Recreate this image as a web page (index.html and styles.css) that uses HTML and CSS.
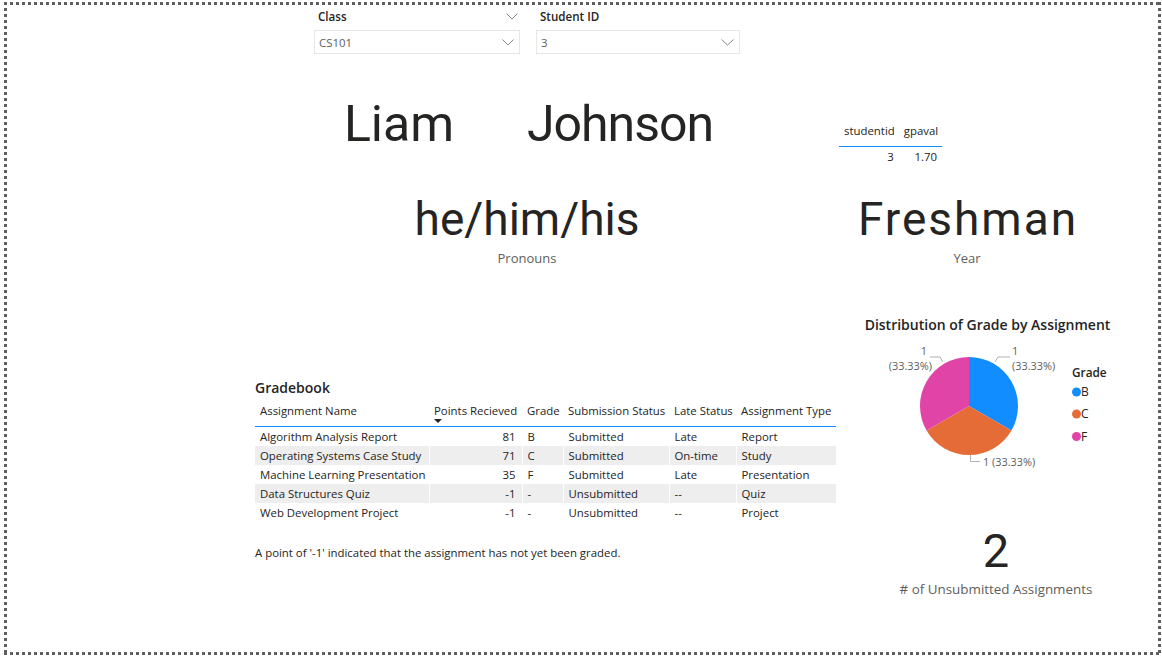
FILE: index.html
```html
<!DOCTYPE html>
<html lang="en">
<head>
<meta charset="utf-8">
<title>Student Report</title>
<link rel="stylesheet" href="styles.css">
</head>
<body>
<div class="page">
  <div class="slicers">
    <div class="slicer slicer-class">
      <div class="slicer-head">
        <span>Class</span>
        <svg class="chev" width="12" height="7" viewBox="0 0 12 7"><polyline points="0.5,0.5 6,6 11.5,0.5" fill="none" stroke="#8a8886" stroke-width="1"/></svg>
      </div>
      <div class="slicer-box">
        <span>CS101</span>
        <svg class="chev" width="12" height="7" viewBox="0 0 12 7"><polyline points="0.5,0.5 6,6 11.5,0.5" fill="none" stroke="#8a8886" stroke-width="1"/></svg>
      </div>
    </div>
    <div class="slicer slicer-id">
      <div class="slicer-head">
        <span>Student ID</span>
      </div>
      <div class="slicer-box">
        <span>3</span>
        <svg class="chev" width="13" height="7" viewBox="0 0 13 7"><polyline points="0.5,0.5 6.5,6 12.5,0.5" fill="none" stroke="#8a8886" stroke-width="1"/></svg>
      </div>
    </div>
  </div>

  <div class="names">
    <div class="name-card">Liam</div>
    <div class="name-card name-tight">Johnson</div>
    <table class="mini">
      <thead><tr><th>studentid</th><th>gpaval</th></tr></thead>
      <tbody><tr><td>3</td><td>1.70</td></tr></tbody>
    </table>
  </div>

  <div class="facts">
    <div class="fact">
      <div class="big">he/him/his</div>
      <div class="caption">Pronouns</div>
    </div>
    <div class="fact">
      <div class="big big-wide">Freshman</div>
      <div class="caption">Year</div>
    </div>
  </div>

  <div class="lower">
    <div class="left">
      <h2 class="visual-title">Gradebook</h2>
      <table class="grades">
        <colgroup>
          <col class="c-name"><col class="c-points"><col class="c-grade"><col class="c-sub"><col class="c-late"><col class="c-type">
        </colgroup>
        <thead>
          <tr>
            <th>Assignment Name</th>
            <th class="points">Points Recieved<span class="sort"></span></th>
            <th>Grade</th>
            <th>Submission Status</th>
            <th>Late Status</th>
            <th>Assignment Type</th>
          </tr>
        </thead>
        <tbody>
          <tr><td>Algorithm Analysis Report</td><td class="num">81</td><td>B</td><td>Submitted</td><td>Late</td><td>Report</td></tr>
          <tr><td>Operating Systems Case Study</td><td class="num">71</td><td>C</td><td>Submitted</td><td>On-time</td><td>Study</td></tr>
          <tr><td>Machine Learning Presentation</td><td class="num">35</td><td>F</td><td>Submitted</td><td>Late</td><td>Presentation</td></tr>
          <tr><td>Data Structures Quiz</td><td class="num">-1</td><td>-</td><td>Unsubmitted</td><td>--</td><td>Quiz</td></tr>
          <tr><td>Web Development Project</td><td class="num">-1</td><td>-</td><td>Unsubmitted</td><td>--</td><td>Project</td></tr>
        </tbody>
      </table>
      <p class="note">A point of '-1' indicated that the assignment has not yet been graded.</p>
    </div>

    <div class="right">
      <h2 class="visual-title pie-title">Distribution of Grade by Assignment</h2>
      <svg class="pie" width="255" height="140" viewBox="0 0 255 140">
        <path d="M109 69 L109 20 A49 49 0 0 1 151.44 93.5 Z" fill="#118DFF"/>
        <path d="M109 69 L151.44 93.5 A49 49 0 0 1 66.56 93.5 Z" fill="#E66C37"/>
        <path d="M109 69 L66.56 93.5 A49 49 0 0 1 109 20 Z" fill="#E044A7"/>
        <polyline points="135,25 138,20 150,20" fill="none" stroke="#b3b0ad" stroke-width="1"/>
        <polyline points="70,20 80,20 83,25" fill="none" stroke="#b3b0ad" stroke-width="1"/>
        <polyline points="110.5,118 110.5,124.5 120,124.5" fill="none" stroke="#b3b0ad" stroke-width="1"/>
        <g class="pie-label">
          <text x="152" y="18">1</text>
          <text x="152" y="33">(33.33%)</text>
          <text x="67" y="18" text-anchor="end">1</text>
          <text x="72" y="33" text-anchor="end">(33.33%)</text>
          <text x="123" y="129">1 (33.33%)</text>
        </g>
        <text class="legend-title" x="212" y="40">Grade</text>
        <circle cx="216.5" cy="55" r="4.5" fill="#118DFF"/>
        <circle cx="216.5" cy="77" r="4.5" fill="#E66C37"/>
        <circle cx="216.5" cy="99.5" r="4.5" fill="#E044A7"/>
        <g class="legend-label">
          <text x="221" y="59">B</text>
          <text x="221" y="81">C</text>
          <text x="221" y="103.5">F</text>
        </g>
      </svg>
      <div class="count">
        <div class="count-value">2</div>
        <div class="caption">#&nbsp;of Unsubmitted Assignments</div>
      </div>
    </div>
  </div>
</div>
</body>
</html>
```

FILE: styles.css
```css
html, body {
  margin: 0;
  padding: 0;
  background: #ffffff;
}

body {
  font-family: "Open Sans", "Noto Sans", sans-serif;
  color: #252423;
}

.page {
  margin: 2px 0 0 4px;
  width: 1157px;
  height: 653px;
  box-sizing: border-box;
  background-image:
    repeating-linear-gradient(90deg, #5f5f5f 0 3px, transparent 3px 6px),
    repeating-linear-gradient(90deg, #5f5f5f 0 3px, transparent 3px 6px),
    repeating-linear-gradient(180deg, #5f5f5f 0 3px, transparent 3px 6px),
    repeating-linear-gradient(180deg, #5f5f5f 0 3px, transparent 3px 6px);
  background-size: 100% 3px, 100% 3px, 3px 100%, 3px 100%;
  background-position: left top, left bottom, left top, right top;
  background-repeat: no-repeat;
  overflow: hidden;
}

/* ---------- slicers ---------- */
.slicers {
  display: flex;
  gap: 16px;
  padding: 4px 0 0 310px;
}

.slicer-class { width: 206px; }
.slicer-id { width: 204px; }

.slicer-head {
  display: flex;
  align-items: center;
  justify-content: space-between;
  height: 21px;
  padding: 0 2px 0 4px;
  font-size: 11.6px;
  font-weight: 600;
  line-height: 21px;
}

.slicer-box {
  display: flex;
  align-items: center;
  justify-content: space-between;
  box-sizing: border-box;
  height: 24px;
  margin-top: 3px;
  padding: 0 5px 0 4px;
  border: 1px solid #e6e6e6;
  font-size: 11.4px;
  color: #605e5c;
}

.chev { display: block; }

/* ---------- names ---------- */
.names {
  display: flex;
  align-items: flex-start;
  margin-top: 45px;
  padding-left: 296px;
}

.name-card {
  width: 198px;
  text-align: center;
  font-family: Roboto, "DejaVu Sans", sans-serif;
  font-size: 50px;
  line-height: 50px;
  color: #252423;
}

.name-card + .name-card { margin-left: 23px; }

.name-tight { letter-spacing: -1px; }

.mini {
  margin: 21px 0 0 120px;
  border-collapse: collapse;
  font-size: 11.4px;
}

.mini th {
  font-weight: 400;
  line-height: 22px;
  padding: 0 4px 4px 5px;
  text-align: left;
  border-bottom: 1px solid #118dff;
}

.mini td {
  line-height: 20px;
  padding: 0 5px 0 5px;
  text-align: right;
}

/* ---------- facts ---------- */
.facts {
  display: flex;
  gap: 140px;
  margin-top: 29px;
  padding-left: 373px;
}

.fact {
  width: 300px;
  text-align: center;
}

.big {
  font-family: Roboto, "DejaVu Sans", sans-serif;
  font-size: 46px;
  line-height: 46px;
  color: #252423;
}

.big-wide {
  letter-spacing: 2px;
  padding-left: 2px;
}

.caption {
  margin-top: 8px;
  font-size: 13px;
  line-height: 16px;
  color: #605e5c;
}

/* ---------- lower ---------- */
.lower {
  display: grid;
  grid-template-columns: 581px 255px;
  column-gap: 24px;
  margin-top: 49px;
  padding-left: 251px;
}

.visual-title {
  margin: 0;
  font-size: 14px;
  font-weight: 600;
  line-height: 20px;
  color: #252423;
}

.left { padding-top: 63px; }

.grades {
  width: 581px;
  table-layout: fixed;
  border-collapse: collapse;
  margin-top: 1px;
  font-size: 11.4px;
}

.c-name { width: 174px; }
.c-points { width: 93px; }
.c-grade { width: 41px; }
.c-sub { width: 106px; }
.c-late { width: 67px; }
.c-type { width: 100px; }

.grades th {
  position: relative;
  height: 27px;
  padding: 0 5px 3px;
  box-sizing: border-box;
  font-weight: 400;
  line-height: 24px;
  text-align: left;
  white-space: nowrap;
  border-bottom: 1px solid #118dff;
}

.grades .sort {
  position: absolute;
  left: 5px;
  top: 20px;
  width: 0;
  height: 0;
  border-left: 4px solid transparent;
  border-right: 4px solid transparent;
  border-top: 4px solid #252423;
}

.grades td {
  height: 19px;
  padding: 0 5px;
  line-height: 19px;
  white-space: nowrap;
  border-left: 1px solid #ffffff;
}

.grades td:first-child { border-left: 0; }

.grades td.num {
  text-align: right;
  padding-right: 6px;
}

.grades tbody tr:nth-child(even) td { background: #eeeeee; }

.note {
  margin: 23px 0 0;
  font-size: 11.4px;
  line-height: 16px;
}

/* ---------- right column ---------- */
.pie-title { text-align: center; }

.pie {
  display: block;
  margin-top: 2px;
}

.pie-label text {
  font-family: "Open Sans", sans-serif;
  font-size: 10.9px;
  fill: #605e5c;
}

.legend-title {
  font-family: "Open Sans", sans-serif;
  font-size: 11.8px;
  font-weight: 600;
  fill: #252423;
}

.legend-label text {
  font-family: "Open Sans", sans-serif;
  font-size: 12px;
  fill: #252423;
}

.count {
  margin-top: 50px;
  padding-left: 17px;
  text-align: center;
}

.count-value {
  font-family: Roboto, "DejaVu Sans", sans-serif;
  font-size: 47px;
  line-height: 47px;
  color: #252423;
}

.count .caption {
  margin-top: 6px;
  font-size: 13.4px;
  line-height: 18px;
}
```
